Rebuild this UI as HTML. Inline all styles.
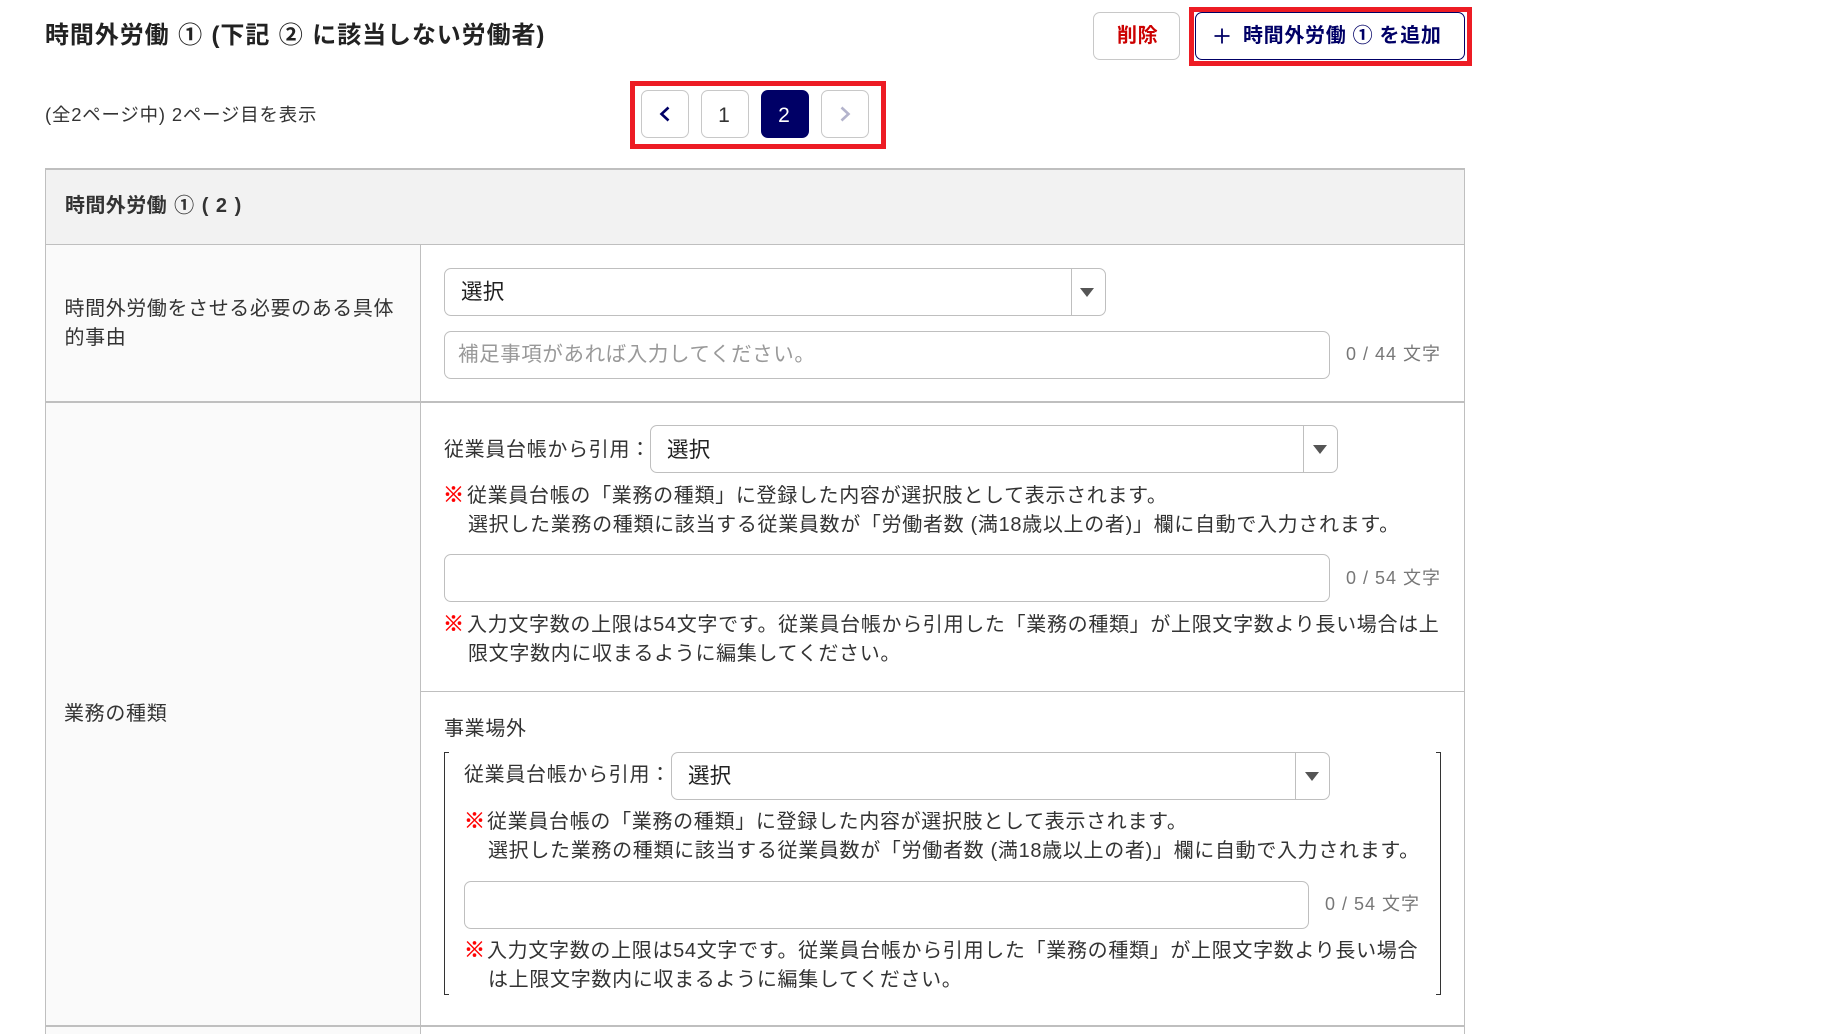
<!DOCTYPE html>
<html lang="ja"><head><meta charset="utf-8"><title>時間外労働</title>
<style>
html,body{margin:0;padding:0;background:#fff}
body{width:1839px;height:1034px;position:relative;overflow:hidden;font-family:"Liberation Sans","Noto Sans CJK JP",sans-serif;color:#333}
.a{position:absolute;box-sizing:border-box}
.t{position:absolute;white-space:nowrap;line-height:30px;height:30px;font-size:20px;letter-spacing:.68px}
.b{font-weight:700}
.box{position:absolute;box-sizing:border-box;border:1.5px solid #bfbfbf;border-radius:7px;background:#fff}
.div{position:absolute;width:1px;background:#bfbfbf}
.tri{position:absolute;width:0;height:0;border-left:7px solid transparent;border-right:7px solid transparent;border-top:9px solid #555}
.c{color:#777;font-size:18px;letter-spacing:1px}
.r{color:#f00;font-weight:700;letter-spacing:0;font-size:21px;-webkit-text-stroke:.5px #f00}
.s{font-size:21.5px;letter-spacing:.3px;color:#222}
.pg{position:absolute;top:90px;width:48px;height:48px;box-sizing:border-box;border:1.5px solid #c8c8c8;border-radius:7px;background:#fff;text-align:center;line-height:50px;font-size:21px;color:#333;text-indent:-2px}
</style></head><body>

<div class="t b" style="left:45px;top:21px;font-size:24px;letter-spacing:.9px;word-spacing:1px;color:#222">時間外労働 ① (下記 ② に該当しない労働者)</div>

<div class="a" style="left:1093px;top:12px;width:87px;height:48px;border:1.5px solid #c8c8c8;border-radius:7px;background:#fff"></div>
<div class="t b" style="left:1117px;top:21px;color:#c00">削除</div>

<div class="a" style="left:1189px;top:7px;width:283px;height:59px;border:5px solid #ed1c24;background:#fff"></div>
<div class="a" style="left:1195px;top:12px;width:270px;height:48px;border:1.5px solid #006;border-radius:7px;background:#fff"></div>
<svg class="a" style="left:1214px;top:28px" width="16" height="16" viewBox="0 0 16 16"><path d="M8 0.5V15.5M0.5 8H15.5" stroke="#006" stroke-width="1.8" fill="none"/></svg>
<div class="t b" style="left:1243px;top:21px;color:#006">時間外労働 ① を追加</div>

<div class="t" style="left:45px;top:99.5px;font-size:18.4px;letter-spacing:.85px">(全2ページ中) 2ページ目を表示</div>

<div class="a" style="left:630px;top:81px;width:256px;height:68px;border:5px solid #ed1c24;background:#fff"></div>
<div class="pg" style="left:641px"></div>
<svg class="a" style="left:659px;top:106px" width="12" height="16" viewBox="0 0 12 16"><path d="M9.5 1.5L2.5 8L9.5 14.5" stroke="#006" stroke-width="2.6" fill="none"/></svg>
<div class="pg" style="left:701px">1</div>
<div class="pg" style="left:761px;background:#006;border-color:#006;color:#fff">2</div>
<div class="pg" style="left:821px"></div>
<svg class="a" style="left:839px;top:106px" width="12" height="16" viewBox="0 0 12 16"><path d="M2.5 1.5L9.5 8L2.5 14.5" stroke="#b3b3cc" stroke-width="2.6" fill="none"/></svg>

<!-- table -->
<div class="a" style="left:45px;top:168px;width:1420px;height:866px;border-left:1px solid #bfbfbf;border-right:1.5px solid #bfbfbf;border-top:2px solid #bfbfbf;background:#fff"></div>
<div class="a" style="left:46px;top:170px;width:1418px;height:74px;background:#f2f2f2"></div>
<div class="a" style="left:46px;top:244px;width:1418px;height:1px;background:#bfbfbf"></div>
<div class="a" style="left:46px;top:245px;width:374px;height:789px;background:#fafafa"></div>
<div class="div" style="left:420px;top:245px;height:789px"></div>
<div class="a" style="left:46px;top:401px;width:1418px;height:2px;background:#bfbfbf"></div>
<div class="a" style="left:421px;top:691px;width:1043px;height:1px;background:#bfbfbf"></div>
<div class="a" style="left:46px;top:1025px;width:1418px;height:2px;background:#bfbfbf"></div>

<div class="t b" style="left:65px;top:191px;letter-spacing:.4px;word-spacing:1.2px">時間外労働 ① ( 2 )</div>

<div class="t" style="left:64.5px;top:294px;letter-spacing:.6px">時間外労働をさせる必要のある具体</div>
<div class="t" style="left:64.5px;top:323px;letter-spacing:.6px">的事由</div>

<div class="box" style="left:444px;top:268px;width:662px;height:48px"></div>
<div class="div" style="left:1071px;top:269px;height:46px"></div>
<div class="tri" style="left:1080px;top:288px"></div>
<div class="t s" style="left:461px;top:277px">選択</div>

<div class="box" style="left:444px;top:331px;width:886px;height:48px"></div>
<div class="t" style="left:458px;top:340px;font-size:20.5px;letter-spacing:.6px;color:#999">補足事項があれば入力してください。</div>
<div class="t c" style="left:1346px;top:339px">0 / 44 文字</div>

<div class="t" style="left:64px;top:699px">業務の種類</div>

<!-- 業務の種類 upper -->
<div class="t" style="left:444px;top:435px">従業員台帳から引用：</div>
<div class="box" style="left:650px;top:425px;width:688px;height:48px"></div>
<div class="div" style="left:1303px;top:426px;height:46px"></div>
<div class="tri" style="left:1313px;top:445px"></div>
<div class="t s" style="left:667px;top:435px">選択</div>

<div class="t r" style="left:443px;top:481px">※</div>
<div class="t" style="left:467px;top:481px">従業員台帳の「業務の種類」に登録した内容が選択肢として表示されます。</div>
<div class="t" style="left:468px;top:510px">選択した業務の種類に該当する従業員数が「労働者数 (満18歳以上の者)」欄に自動で入力されます。</div>

<div class="box" style="left:444px;top:554px;width:886px;height:48px"></div>
<div class="t c" style="left:1346px;top:563px">0 / 54 文字</div>

<div class="t r" style="left:443px;top:610px">※</div>
<div class="t" style="left:467px;top:610px">入力文字数の上限は54文字です。従業員台帳から引用した「業務の種類」が上限文字数より長い場合は上</div>
<div class="t" style="left:468px;top:639px">限文字数内に収まるように編集してください。</div>

<!-- 事業場外 -->
<div class="t" style="left:444px;top:714px">事業場外</div>
<svg class="a" style="left:444px;top:752px" width="998" height="243" viewBox="0 0 998 243"><path d="M5 .5H.5V242.5H5M992 .5H996.5V242.5H992" fill="none" stroke="#333" stroke-width="1"/></svg>

<div class="t" style="left:464px;top:760px">従業員台帳から引用：</div>
<div class="box" style="left:671px;top:752px;width:659px;height:48px"></div>
<div class="div" style="left:1295px;top:753px;height:46px"></div>
<div class="tri" style="left:1305px;top:772px"></div>
<div class="t s" style="left:688px;top:761px">選択</div>

<div class="t r" style="left:464px;top:807px">※</div>
<div class="t" style="left:487px;top:807px">従業員台帳の「業務の種類」に登録した内容が選択肢として表示されます。</div>
<div class="t" style="left:488px;top:836px">選択した業務の種類に該当する従業員数が「労働者数 (満18歳以上の者)」欄に自動で入力されます。</div>

<div class="box" style="left:464px;top:881px;width:845px;height:48px"></div>
<div class="t c" style="left:1325px;top:889px">0 / 54 文字</div>

<div class="t r" style="left:464px;top:936px">※</div>
<div class="t" style="left:487px;top:936px">入力文字数の上限は54文字です。従業員台帳から引用した「業務の種類」が上限文字数より長い場合</div>
<div class="t" style="left:488px;top:964.5px">は上限文字数内に収まるように編集してください。</div>

</body></html>
